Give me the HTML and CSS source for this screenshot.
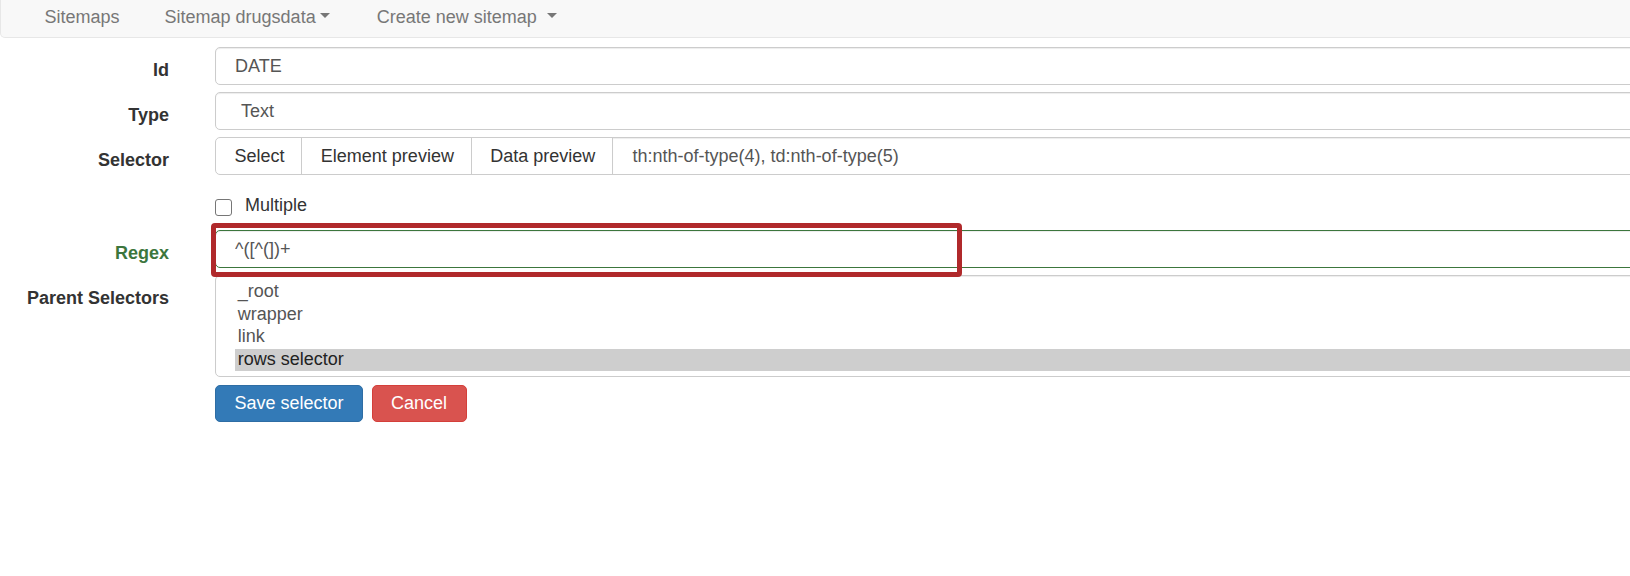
FILE: index.html
```html
<!DOCTYPE html>
<html lang="en">
<head>
<meta charset="utf-8">
<title>Edit selector</title>
<link rel="stylesheet" href="styles.css">
</head>
<body>
<div class="page">
  <nav class="navbar">
    <ul class="nav">
      <li><a class="nav-link">Sitemaps</a></li>
      <li><a class="nav-link">Sitemap drugsdata<span class="caret caret-tight"></span></a></li>
      <li><a class="nav-link">Create new sitemap<span class="caret caret-wide"></span></a></li>
    </ul>
  </nav>

  <form class="form">
    <label class="lbl">Id</label>
    <div class="field"><input class="ctrl" type="text" value="DATE" readonly></div>

    <label class="lbl">Type</label>
    <div class="field"><div class="ctrl select">Text</div></div>

    <label class="lbl">Selector</label>
    <div class="field">
      <div class="group">
        <span class="group-btn">Select</span>
        <span class="group-btn">Element preview</span>
        <span class="group-btn">Data preview</span>
        <span class="group-input">th:nth-of-type(4), td:nth-of-type(5)</span>
      </div>
    </div>

    <div class="lbl-empty"></div>
    <div class="check-row">
      <span class="checkbox"></span>
      <span class="check-label">Multiple</span>
    </div>

    <label class="lbl lbl-success">Regex</label>
    <div class="field regex-field">
      <input class="ctrl ctrl-success" type="text" value="^([^(])+" readonly>
      <div class="annot"></div>
    </div>

    <label class="lbl">Parent Selectors</label>
    <div class="field">
      <div class="multi">
        <div class="opt">_root</div>
        <div class="opt">wrapper</div>
        <div class="opt">link</div>
        <div class="opt opt-selected">rows selector</div>
      </div>
    </div>

    <div class="lbl-empty"></div>
    <div class="actions">
      <button type="button" class="btn btn-primary">Save selector</button>
      <button type="button" class="btn btn-danger">Cancel</button>
    </div>
  </form>
</div>
</body>
</html>
```

FILE: styles.css
```css
html, body {
  margin: 0;
  padding: 0;
  background: #fff;
}

body {
  font-family: "Liberation Sans", Arial, Helvetica, sans-serif;
  font-size: 18px;
  color: #333;
  overflow: hidden;
}

.page {
  width: 1720px;
}

/* ---------- navbar ---------- */
.navbar {
  box-sizing: border-box;
  height: 38px;
  padding-bottom: 4px;
  background: #f8f8f8;
  border: 1px solid #e7e7e7;
  border-top: none;
  border-radius: 0 0 5px 5px;
}

.nav {
  display: flex;
  align-items: center;
  height: 100%;
  list-style: none;
  margin: 0;
  padding: 0 0 0 21px;
}

.nav-link {
  display: block;
  padding: 0 22.5px;
  color: #777;
  text-decoration: none;
  line-height: 20px;
}

.caret {
  display: inline-block;
  width: 0;
  height: 0;
  border-top: 5px solid #777;
  border-left: 5px solid transparent;
  border-right: 5px solid transparent;
  vertical-align: 5px;
}

.caret-tight {
  margin: 0 2px 0 4px;
}

.caret-wide {
  margin-left: 10px;
}

/* ---------- form ---------- */
.form {
  display: grid;
  grid-template-columns: 169px 1480px;
  column-gap: 46px;
  row-gap: 7px;
  margin-top: 9px;
}

.lbl {
  padding-top: 13px;
  line-height: 20px;
  text-align: right;
  font-weight: bold;
  color: #333;
}

.lbl-success {
  color: #3c763d;
}

.field {
  min-width: 0;
}

.ctrl {
  display: block;
  box-sizing: border-box;
  width: 100%;
  height: 38px;
  margin: 0;
  padding: 0 19px;
  border: 1px solid #ccc;
  border-radius: 5px;
  background: #fff;
  box-shadow: inset 0 1px 1px rgba(0, 0, 0, 0.075);
  font: inherit;
  color: #555;
  outline: none;
}

.select {
  display: flex;
  align-items: center;
  padding-left: 25px;
}

.ctrl-success {
  border-color: #3c763d;
}

/* input group */
.group {
  display: flex;
  box-sizing: border-box;
  height: 38px;
  border: 1px solid #ccc;
  border-radius: 5px;
  background: #fff;
  overflow: hidden;
}

.group-btn {
  display: flex;
  align-items: center;
  padding: 0 16.8px 0 18.5px;
  border-right: 1px solid #ccc;
  color: #333;
  white-space: nowrap;
}

.group-input {
  display: flex;
  align-items: center;
  flex: 1;
  padding: 0 19.5px;
  color: #555;
  box-shadow: inset 0 1px 1px rgba(0, 0, 0, 0.075);
  white-space: nowrap;
}

/* checkbox row */
.check-row {
  display: flex;
  align-items: flex-start;
  height: 41px;
}

.checkbox {
  box-sizing: border-box;
  width: 17px;
  height: 17px;
  margin-top: 17px;
  border: 1.5px solid #767676;
  border-radius: 3px;
  background: #fff;
}

.check-label {
  margin-top: 13px;
  margin-left: 13px;
  line-height: 20px;
  color: #333;
}

/* annotated regex */
.regex-field {
  position: relative;
}

.annot {
  position: absolute;
  left: -4px;
  top: -7px;
  width: 751px;
  height: 54px;
  box-sizing: border-box;
  border: 5.5px solid #b0292b;
  border-radius: 4px;
  pointer-events: none;
}

/* multi select */
.multi {
  box-sizing: border-box;
  height: 102px;
  padding: 5px 0 0 19px;
  border: 1px solid #ccc;
  border-radius: 5px;
  background: #fff;
  box-shadow: inset 0 1px 1px rgba(0, 0, 0, 0.075);
  overflow: hidden;
}

.opt {
  height: 22.6px;
  line-height: 21px;
  padding: 0 2.7px;
  color: #555;
  white-space: nowrap;
}

.opt-selected {
  background: #cecece;
  color: #222;
}

/* buttons */
.actions {
  display: flex;
  gap: 8.5px;
  margin-top: 1px;
}

.btn {
  display: inline-flex;
  align-items: center;
  box-sizing: border-box;
  height: 37px;
  margin: 0;
  padding: 0 18.5px;
  border: 1px solid transparent;
  border-radius: 5px;
  font: inherit;
  color: #fff;
  cursor: pointer;
}

.btn-primary {
  background: #337ab7;
  border-color: #2e6da4;
}

.btn-danger {
  background: #d9534f;
  border-color: #d43f3a;
}
```
